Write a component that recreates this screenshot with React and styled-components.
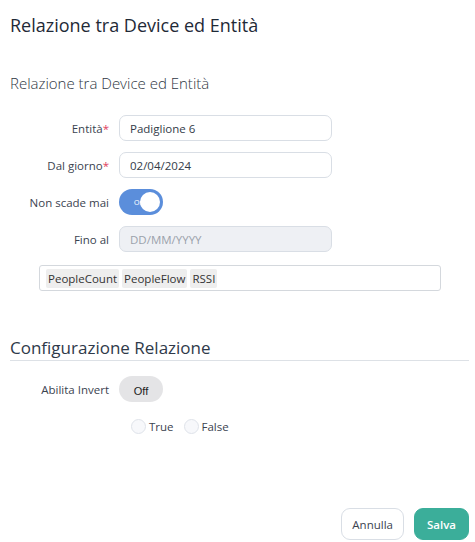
import React from "react";
import styled, { createGlobalStyle } from "styled-components";

const GlobalStyle = createGlobalStyle`
  html, body {
    margin: 0;
    padding: 0;
    background: #fff;
  }
  body {
    font-family: "Open Sans", "Liberation Sans", sans-serif;
    color: #2a3342;
  }
`;

const tags = ["PeopleCount", "PeopleFlow", "RSSI"];

const App = () => {
  return (
    <Page>
      <GlobalStyle />
      <Title>Relazione tra Device ed Entità</Title>

      <SectionTitle>Relazione tra Device ed Entità</SectionTitle>

      <Form>
        <Label>
          Entità<Required>*</Required>
        </Label>
        <Input defaultValue="Padiglione 6" />

        <Label>
          Dal giorno<Required>*</Required>
        </Label>
        <Input defaultValue="02/04/2024" />

        <Label>Non scade mai</Label>
        <Toggle $on>
          <ToggleText $on>On</ToggleText>
          <Knob />
        </Toggle>

        <Label>Fino al</Label>
        <Input disabled placeholder="DD/MM/YYYY" />
      </Form>

      <TagBox>
        {tags.map(tag => (
          <Tag key={tag}>{tag}</Tag>
        ))}
      </TagBox>

      <ConfigTitle>Configurazione Relazione</ConfigTitle>

      <Form $compact>
        <Label>Abilita Invert</Label>
        <Toggle>
          <ToggleText>Off</ToggleText>
        </Toggle>
      </Form>

      <Radios>
        <RadioItem>
          <RadioCircle />
          True
        </RadioItem>
        <RadioItem>
          <RadioCircle />
          False
        </RadioItem>
      </Radios>

      <Footer>
        <Button>Annulla</Button>
        <Button $primary>Salva</Button>
      </Footer>
    </Page>
  );
};

const Page = styled.div`
  min-height: 100vh;
  box-sizing: border-box;
  padding: 12px 6px 2px 10px;
  display: flex;
  flex-direction: column;
`;

const Title = styled.h2`
  margin: 0;
  font-size: 18px;
  font-weight: 500;
  color: #1f2a37;
  line-height: 26px;
`;

const SectionTitle = styled.h3`
  margin: 33px 0 0;
  font-size: 15px;
  font-weight: 300;
  color: #2f3744;
  line-height: 24px;
`;

const Form = styled.div`
  display: grid;
  grid-template-columns: 99px 213px;
  column-gap: 10px;
  row-gap: 11px;
  align-items: center;
  margin-top: ${p => (p.$compact ? "15px" : "20px")};
`;

const Label = styled.label`
  text-align: right;
  font-size: 11.5px;
  color: #3b4350;
`;

const Required = styled.span`
  color: #e0405e;
`;

const Input = styled.input`
  box-sizing: border-box;
  height: 26px;
  width: 100%;
  border: 1px solid #d9dee5;
  border-radius: 7px;
  padding: 0 10px;
  font-family: inherit;
  font-size: 11.5px;
  color: #333b48;
  background: #fff;
  outline: none;

  &:disabled {
    background: #eef0f4;
  }
  &::placeholder {
    color: #9aa1ab;
  }
`;

const Toggle = styled.div`
  position: relative;
  box-sizing: border-box;
  width: 44px;
  height: 26px;
  border-radius: 13px;
  background: ${p => (p.$on ? "#5b8edb" : "#e4e4e6")};
  display: flex;
  align-items: center;
  justify-content: ${p => (p.$on ? "flex-start" : "center")};
  padding: 0 3px;
`;

const ToggleText = styled.span`
  font-size: ${p => (p.$on ? "7px" : "11px")};
  color: ${p => (p.$on ? "#fff" : "#222")};
  margin-left: ${p => (p.$on ? "12px" : "0")};
  margin-top: ${p => (p.$on ? "0" : "4px")};
  font-family: "Liberation Sans", sans-serif;
`;

const Knob = styled.span`
  position: absolute;
  right: 3px;
  top: 3px;
  width: 20px;
  height: 20px;
  border-radius: 50%;
  background: #fff;
`;

const TagBox = styled.div`
  box-sizing: border-box;
  margin: 13px 0 0 29px;
  width: 402px;
  height: 26px;
  border: 1px solid #d4d8dd;
  border-radius: 3px;
  display: flex;
  align-items: center;
  gap: 3px;
  padding: 0 6px;
`;

const Tag = styled.span`
  background: #eeeeee;
  border-radius: 2px;
  padding: 2px 2px;
  font-size: 11.5px;
  color: #333;
`;

const ConfigTitle = styled.h3`
  margin: 45px 0 0;
  padding-bottom: 0;
  border-bottom: 1px solid #dde1e6;
  font-size: 17px;
  font-weight: 400;
  color: #2f3a4a;
  line-height: 24px;
`;

const Radios = styled.div`
  display: flex;
  gap: 10px;
  margin: 17px 0 0 121px;
`;

const RadioItem = styled.label`
  display: flex;
  align-items: center;
  gap: 3px;
  font-size: 11.5px;
  color: #3b4350;
`;

const RadioCircle = styled.span`
  box-sizing: border-box;
  width: 15px;
  height: 15px;
  border-radius: 50%;
  border: 1px solid #dfe3ea;
  background: #f7f8fb;
`;

const Footer = styled.div`
  margin-top: auto;
  display: flex;
  justify-content: flex-end;
  gap: 10px;
`;

const Button = styled.button`
  box-sizing: border-box;
  height: 32px;
  padding: 0 ${p => (p.$primary ? "12px" : "10px")};
  border-radius: 9px;
  border: 1px solid ${p => (p.$primary ? "#3bae9a" : "#d9dee5")};
  background: ${p => (p.$primary ? "#3bae9a" : "#fff")};
  color: ${p => (p.$primary ? "#fff" : "#3b4350")};
  font-family: inherit;
  font-size: 11.5px;
  font-weight: ${p => (p.$primary ? 600 : 400)};
`;

export default App;
